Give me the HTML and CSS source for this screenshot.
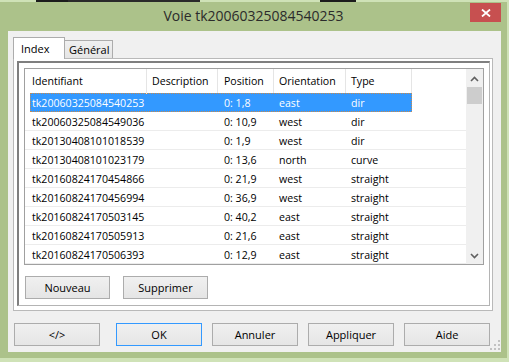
FILE: index.html
```html
<!DOCTYPE html>
<html lang="fr">
<head>
    <meta charset="UTF-8">
    <title>Voie tk20060325084540253</title>
    <link rel="stylesheet" href="styles.css">
</head>
<body>

<div class="desk">
    <div class="window">
        <div class="titlebar">
            <span class="title">Voie tk20060325084540253</span>
            <div class="close">
                <svg width="10" height="8" viewBox="0 0 10 8"><path d="M1 0.5 L9 7.5 M9 0.5 L1 7.5" stroke="#fff" stroke-width="1.8"/></svg>
            </div>
        </div>

        <div class="client">
            <div class="tabs">
                <div class="tab active">Index</div>
                <div class="tab">Général</div>
            </div>

            <div class="pane">
                <div class="panel">
                    <div class="list">
                        <div class="rows">
                            <div class="head">
                                <span>Identifiant</span>
                                <span>Description</span>
                                <span>Position</span>
                                <span>Orientation</span>
                                <span>Type</span>
                            </div>
                            <div class="row selected"><div class="cells"><span>tk20060325084540253</span><span></span><span>0: 1,8</span><span>east</span><span>dir</span></div></div>
                            <div class="row"><div class="cells"><span>tk20060325084549036</span><span></span><span>0: 10,9</span><span>west</span><span>dir</span></div></div>
                            <div class="row"><div class="cells"><span>tk20130408101018539</span><span></span><span>0: 1,9</span><span>west</span><span>dir</span></div></div>
                            <div class="row"><div class="cells"><span>tk20130408101023179</span><span></span><span>0: 13,6</span><span>north</span><span>curve</span></div></div>
                            <div class="row"><div class="cells"><span>tk20160824170454866</span><span></span><span>0: 21,9</span><span>west</span><span>straight</span></div></div>
                            <div class="row"><div class="cells"><span>tk20160824170456994</span><span></span><span>0: 36,9</span><span>west</span><span>straight</span></div></div>
                            <div class="row"><div class="cells"><span>tk20160824170503145</span><span></span><span>0: 40,2</span><span>east</span><span>straight</span></div></div>
                            <div class="row"><div class="cells"><span>tk20160824170505913</span><span></span><span>0: 21,6</span><span>east</span><span>straight</span></div></div>
                            <div class="row"><div class="cells"><span>tk20160824170506393</span><span></span><span>0: 12,9</span><span>east</span><span>straight</span></div></div>
                        </div>
                        <div class="scrollbar">
                            <svg class="arrow" width="9" height="6" viewBox="0 0 9 6"><path d="M1 5 L4.5 1.5 L8 5" fill="none" stroke="#606060" stroke-width="1.6"/></svg>
                            <div class="thumb"></div>
                            <div class="track"></div>
                            <svg class="arrow" width="9" height="6" viewBox="0 0 9 6"><path d="M1 1 L4.5 4.5 L8 1" fill="none" stroke="#606060" stroke-width="1.6"/></svg>
                        </div>
                    </div>
                    <div class="list-actions">
                        <button class="btn">Nouveau</button>
                        <button class="btn">Supprimer</button>
                    </div>
                </div>
            </div>

            <div class="dialog-actions">
                <button class="btn">&lt;/&gt;</button>
                <button class="btn default">OK</button>
                <button class="btn">Annuler</button>
                <button class="btn">Appliquer</button>
                <button class="btn">Aide</button>
            </div>

            <!-- poignée de redimensionnement -->
            <svg class="grip" width="10" height="10" viewBox="0 0 10 10">
                <rect x="8" y="0" width="2" height="2" fill="#c2c2c2"/>
                <rect x="4" y="4" width="2" height="2" fill="#c2c2c2"/>
                <rect x="8" y="4" width="2" height="2" fill="#c2c2c2"/>
                <rect x="0" y="8" width="2" height="2" fill="#c2c2c2"/>
                <rect x="4" y="8" width="2" height="2" fill="#c2c2c2"/>
                <rect x="8" y="8" width="2" height="2" fill="#c2c2c2"/>
            </svg>
        </div>
    </div>
</div>

</body>
</html>
```

FILE: styles.css
```css
body {
    margin: 0;
    font-family: 'Open Sans', 'Noto Sans', sans-serif;
    font-size: 10.6px;
    color: #000;
    background: #cfe2b7;
}

.desk {
    width: 509px;
    height: 362px;
    overflow: hidden;
    background:
        linear-gradient(90deg, #cfe2b7 0 36px, #1c1c1c 36px 68px, #2a2a2a 68px 200px, #cfe2b7 200px 320px, #1c1c1c 320px 356px, #cfe2b7 356px) top left / 100% 2px no-repeat,
        #cfe2b7;
}

.window {
    margin-top: 2px;
    width: 507px;
    height: 356px;
    box-sizing: border-box;
    padding: 0 6px 6px 8px;
    background: #acc28a;
    display: flex;
    flex-direction: column;
}

.titlebar {
    position: relative;
    height: 29px;
    display: flex;
    justify-content: center;
    align-items: center;
}

.title {
    font-size: 14px;
    color: #2b2b2b;
    margin-top: -2px;
    margin-left: -2px;
}

.close {
    position: absolute;
    top: 1px;
    right: 0;
    width: 31px;
    height: 19px;
    background: #c75050;
    display: flex;
    justify-content: center;
    align-items: center;
}

.client {
    position: relative;
    flex: 1;
    background: #f0f0f0;
    padding: 6px 8px 0 5px;
}

/* Onglets */
.tabs {
    display: flex;
    align-items: flex-end;
    height: 21px;
}

.tab {
    box-sizing: border-box;
    height: 18px;
    border: 1px solid #acacac;
    border-bottom: none;
    background: linear-gradient(#f0f0f0, #e5e5e5);
    padding: 1px 0 0 4px;
    width: 48px;
    border-left: none;
    font-size: 11px;
}

.tab.active {
    position: relative;
    z-index: 1;
    height: 22px;
    margin-bottom: -1px;
    width: 52px;
    background: #fff;
    border-left: 1px solid #acacac;
    padding: 3px 0 0 7px;
}

.pane {
    height: 253px;
    box-sizing: border-box;
    border: 1px solid #b9b9b9;
    background: #fff;
    padding: 2px 2px 4px 3px;
}

.panel {
    height: 100%;
    box-sizing: border-box;
    border-top: 2px solid #7f7f7f;
    border-left: 2px solid #7f7f7f;
    border-right: 1px solid #b4b4b4;
    border-bottom: 1px solid #b4b4b4;
    padding: 5px 5px 0 5px;
}

/* Liste */
.list {
    height: 197px;
    box-sizing: border-box;
    border: 1px solid #a0a0a0;
    display: flex;
    overflow: hidden;
}

.rows {
    flex: 1;
}

.head,
.cells {
    display: grid;
    grid-template-columns: 117px 71px 56px 72px 66px;
    width: 382px;
}

.head {
    height: 24px;
    margin-left: 5px;
}

.head span {
    border-right: 1px solid #e5e5e5;
    padding-left: 5px;
    line-height: 25px;
    white-space: nowrap;
}

.head span:first-child {
    padding-left: 2px;
}

.head span:nth-child(3) {
    padding-left: 6px;
}

.row {
    height: 19px;
    box-sizing: border-box;
    border-bottom: 1px solid #ececec;
    padding-left: 5px;
}

.cells {
    height: 18px;
    box-sizing: border-box;
}

.cells span {
    padding: 1px 0 0 5px;
    line-height: 19px;
    white-space: nowrap;
}

.cells span:first-child {
    padding-left: 2px;
}

.cells span:nth-child(3) {
    padding-left: 6px;
}

.row.selected {
    border-bottom-color: #fff;
}

.row.selected .cells {
    height: 19px;
    background: #3399ff;
    color: #fff;
    outline: 1px dotted #c9894a;
    outline-offset: -1px;
}

.scrollbar {
    width: 17px;
    background: #f0f0f0;
    display: flex;
    flex-direction: column;
    align-items: center;
}

.arrow {
    margin: 7px 0 5px;
}

.thumb {
    width: 15px;
    height: 17px;
    background: #cdcdcd;
}

.track {
    flex: 1;
}

.list-actions {
    display: flex;
    gap: 13px;
    margin-top: 11px;
    padding-left: 1px;
}

/* Boutons */
.btn {
    font-family: inherit;
    font-size: 11px;
    color: #000;
    width: 86px;
    height: 23px;
    padding: 0;
    border: 1px solid #acacac;
    background: linear-gradient(#f0f0f0, #e5e5e5);
}

.list-actions .btn {
    width: 85px;
}

.btn.default {
    border-color: #3399ff;
}

.dialog-actions {
    display: flex;
    gap: 10px;
    margin-top: 12px;
    padding-left: 1px;
}

.dialog-actions .btn:first-child {
    margin-right: 6px;
}

.grip {
    position: absolute;
    right: 1px;
    bottom: 2px;
}
```
